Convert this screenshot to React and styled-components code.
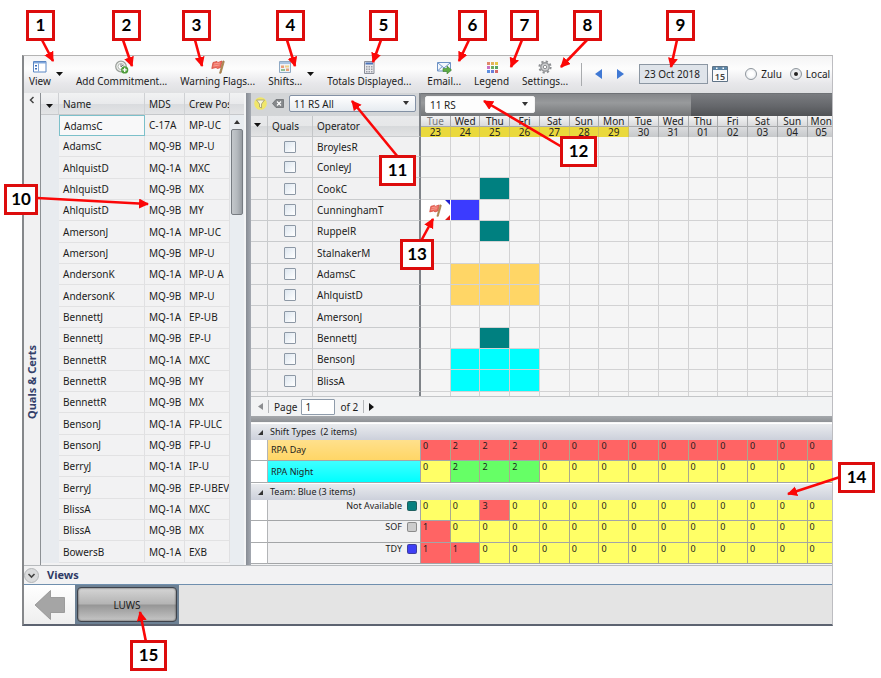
import React from "react";
import styled, { createGlobalStyle, css } from "styled-components";

const GlobalStyle = createGlobalStyle`
  *, *::before, *::after { box-sizing: border-box; }
  body { margin: 0; background: #fff; }
  body, button, input, select {
    font-family: "Noto Sans", "Open Sans", sans-serif;
    font-size: 10px;
    line-height: 14px;
    color: #1c1c1c;
  }
  button { border: 0; padding: 0; background: none; }
  table { border-collapse: separate; border-spacing: 0; table-layout: fixed; width: 100%; }
  th, td { padding: 0; font-weight: 400; text-align: left; white-space: nowrap; overflow: hidden; }
`;

/* ---------- data ---------- */

const qualRows = [
  ["AdamsC", "C-17A", "MP-UC"],
  ["AdamsC", "MQ-9B", "MP-U"],
  ["AhlquistD", "MQ-1A", "MXC"],
  ["AhlquistD", "MQ-9B", "MX"],
  ["AhlquistD", "MQ-9B", "MY"],
  ["AmersonJ", "MQ-1A", "MP-UC"],
  ["AmersonJ", "MQ-9B", "MP-U"],
  ["AndersonK", "MQ-1A", "MP-U A"],
  ["AndersonK", "MQ-9B", "MP-U"],
  ["BennettJ", "MQ-1A", "EP-UB"],
  ["BennettJ", "MQ-9B", "EP-U"],
  ["BennettR", "MQ-1A", "MXC"],
  ["BennettR", "MQ-9B", "MY"],
  ["BennettR", "MQ-9B", "MX"],
  ["BensonJ", "MQ-1A", "FP-ULC"],
  ["BensonJ", "MQ-9B", "FP-U"],
  ["BerryJ", "MQ-1A", "IP-U"],
  ["BerryJ", "MQ-9B", "EP-UBEV"],
  ["BlissA", "MQ-1A", "MXC"],
  ["BlissA", "MQ-9B", "MX"],
  ["BowersB", "MQ-1A", "EXB"],
];

const days = [
  ["Tue", "23"], ["Wed", "24"], ["Thu", "25"], ["Fri", "26"], ["Sat", "27"],
  ["Sun", "28"], ["Mon", "29"], ["Tue", "30"], ["Wed", "31"], ["Thu", "01"],
  ["Fri", "02"], ["Sat", "03"], ["Sun", "04"], ["Mon", "05"],
];

const TEAL = "#008080";
const BLUE = "#3b3bff";
const GOLD = "#ffd666";
const CYAN = "#00ffff";

const operators = [
  { name: "BroylesR" },
  { name: "ConleyJ" },
  { name: "CookC", shifts: { 2: TEAL } },
  { name: "CunninghamT", shifts: { 1: BLUE }, flag: true },
  { name: "RuppelR", shifts: { 2: TEAL } },
  { name: "StalnakerM" },
  { name: "AdamsC", shifts: { 1: GOLD, 2: GOLD, 3: GOLD } },
  { name: "AhlquistD", shifts: { 1: GOLD, 2: GOLD, 3: GOLD } },
  { name: "AmersonJ" },
  { name: "BennettJ", shifts: { 2: TEAL } },
  { name: "BensonJ", shifts: { 1: CYAN, 2: CYAN, 3: CYAN } },
  { name: "BlissA", shifts: { 1: CYAN, 2: CYAN, 3: CYAN } },
  { name: "" },
];

const RED = "#ff6464";
const YELLOW = "#ffff66";
const GREEN = "#66ff66";
const zeros = (n) => Array(n).fill(0);

const groups = [
  {
    title: "Shift Types  (2 items)",
    rows: [
      { label: "RPA Day", bar: GOLD, counts: [0, 2, 2, 2, ...zeros(10)], color: () => RED },
      { label: "RPA Night", bar: CYAN, counts: [0, 2, 2, 2, ...zeros(10)], color: (n) => (n ? GREEN : YELLOW) },
    ],
  },
  {
    title: "Team: Blue (3 items)",
    rows: [
      { label: "Not Available", swatch: "#0a8080", counts: [0, 0, 3, ...zeros(11)] },
      { label: "SOF", swatch: "#cccccc", counts: [1, ...zeros(13)] },
      { label: "TDY", swatch: "#3f3ff5", counts: [1, 1, ...zeros(12)] },
    ],
  },
];

const callouts = [
  { n: 1, x: 26, y: 10, w: 29, from: [42, 40], to: [53, 61] },
  { n: 2, x: 112, y: 10, w: 29, from: [123, 40], to: [132, 66] },
  { n: 3, x: 182, y: 10, w: 29, from: [195, 40], to: [202, 66] },
  { n: 4, x: 276, y: 10, w: 29, from: [287, 40], to: [295, 66] },
  { n: 5, x: 369, y: 10, w: 29, from: [381, 40], to: [373, 62] },
  { n: 6, x: 458, y: 10, w: 29, from: [469, 40], to: [459, 61] },
  { n: 7, x: 510, y: 10, w: 29, from: [522, 40], to: [511, 67] },
  { n: 8, x: 573, y: 10, w: 29, from: [587, 40], to: [561, 67] },
  { n: 9, x: 666, y: 10, w: 29, from: [677, 40], to: [671, 67] },
  { n: 10, x: 4, y: 184, w: 34, from: [37, 198], to: [148, 204] },
  { n: 11, x: 379, y: 155, w: 37, from: [398, 157], to: [352, 101] },
  { n: 12, x: 560, y: 136, w: 37, from: [562, 147], to: [484, 101] },
  { n: 13, x: 400, y: 239, w: 34, from: [421, 241], to: [433, 219] },
  { n: 14, x: 838, y: 462, w: 37, from: [840, 477], to: [788, 494] },
  { n: 15, x: 130, y: 640, w: 37, from: [146, 642], to: [140, 612] },
];

/* ---------- shell ---------- */

const Page = styled.div`
  position: relative;
  padding: 55px 48px 53px 22px;
`;

const Window = styled.main`
  display: flex;
  flex-direction: column;
  border-top: 1px solid #b4b4b4;
  border-right: 1px solid #bdbdc1;
  border-bottom: 2px solid #5c6370;
  border-left: 2px solid #85878a;
  background: #f2f2f3;
`;

const Toolbar = styled.header`
  display: flex;
  align-items: flex-start;
  gap: 13px;
  height: 37px;
  padding: 4px 0 0 5px;
  overflow: hidden;
  background: linear-gradient(#f4f4f5, #fdfdfd 35%, #e7e7ea 75%, #dfe0e2);
`;

const ToolButton = styled.button`
  display: flex;
  flex-direction: column;
  align-items: center;
  flex: none;
  white-space: nowrap;
`;

const SplitTool = styled.div`
  display: flex;
  align-items: center;
  gap: 5px;
`;

const ToolGroup = styled.div`
  display: flex;
  gap: 13px;
  margin-left: 3px;
`;

const Separator = styled.span`
  width: 1px;
  height: 23px;
  margin-top: 3px;
  background: #a9abae;
`;

const DateNav = styled.div`
  display: flex;
  align-items: center;
  gap: 15px;
  height: 28px;
`;

const IconButton = styled.button`
  display: flex;
  align-items: center;
  justify-content: center;
`;

const DateBox = styled.div`
  display: flex;
  align-items: center;
  gap: 4px;
`;

const DateInput = styled.input`
  width: 69px;
  height: 20px;
  padding: 0 4px;
  border: 1px solid #8c97a3;
  background: #dfe4ea;
`;

const ZoneChoice = styled.div`
  display: flex;
  align-items: center;
  gap: 8px;
  height: 28px;
  margin-left: 4px;
`;

const RadioLabel = styled.label`
  display: flex;
  align-items: center;
  gap: 4px;
`;

const Radio = styled.input`
  appearance: none;
  width: 12px;
  height: 12px;
  margin: 0;
  border: 1px solid #8f969d;
  border-radius: 50%;
  background: radial-gradient(circle, #fff 30%, #dfe3e8);
  &:checked {
    background: radial-gradient(circle, #222 0 20%, #eef0f2 35%, #d5dae0);
  }
`;

const Workspace = styled.div`
  display: flex;
  align-items: stretch;
  border-bottom: 1px solid #b7babd;
`;

/* ---------- left dock ---------- */

const DockStrip = styled.div`
  display: flex;
  flex-direction: column;
  align-items: center;
  flex: none;
  width: 17px;
  padding-top: 3px;
  border-right: 1px solid #8c9094;
  background: #f1f1f2;
`;

const DockTitle = styled.span`
  margin-top: 241px;
  writing-mode: vertical-rl;
  transform: rotate(180deg);
  font-weight: 700;
  font-size: 11px;
  color: #34406a;
`;

const QualsPanel = styled.section`
  display: flex;
  flex: none;
  width: 203px;
  background: #f2f2f3;
`;

const QualsGrid = styled.div`
  flex: 1;
  min-width: 0;
`;

const QualHead = styled.th`
  height: 22px;
  padding-left: ${(p) => (p.$first ? 0 : 4)}px;
  text-align: ${(p) => (p.$first ? "center" : "left")};
  border-right: 1px solid #cfd1d4;
  border-bottom: 1px solid #c6c8cb;
  background: linear-gradient(#f1f2f3, #e9eaec 50%, #d9dbde 52%, #e3e4e6);
`;

const QualRow = styled.tr`
  height: 21px;
  &:nth-child(3n) { height: 22px; }
`;

const QualCell = styled.td`
  padding-left: 4px;
  border-right: 1px solid #e0e0e2;
  border-bottom: 1px solid #e2e2e3;
  ${(p) => p.$selected && css`
    border: 1px solid #7cc0ca;
    background: #f8f8f9;
  `}
`;

const RowGutter = styled.td`
  background: #e8ebef;
`;

const ScrollColumn = styled.div`
  display: flex;
  flex-direction: column;
  align-items: center;
  width: 14px;
  background: #e9edf1;
`;

const ScrollHead = styled.div`
  width: 100%;
  height: 22px;
  border-bottom: 1px solid #c6c8cb;
  background: linear-gradient(#f1f2f3, #e9eaec 50%, #d9dbde 52%, #e3e4e6);
`;

const ScrollArrow = styled(IconButton)`
  height: 14px;
`;

const ScrollThumb = styled.div`
  width: 12px;
  height: 86px;
  border: 1px solid #777c82;
  border-radius: 2px;
  background: linear-gradient(90deg, #c3c7cb, #b4b9be 50%, #969ba1);
`;

const VerticalSplitter = styled.div`
  flex: none;
  width: 7px;
  border-left: 2px solid #f4f5f6;
  background: linear-gradient(90deg, #878c94, #a4a9b1);
`;

/* ---------- schedule ---------- */

const Schedule = styled.section`
  flex: 1;
  min-width: 0;
  padding-bottom: 1px;
  background: #f2f3f4;
`;

const FilterRow = styled.div`
  display: flex;
  height: 23px;
`;

const FilterBar = styled.div`
  display: flex;
  align-items: center;
  gap: 5px;
  flex: none;
  width: 170px;
  padding: 0 3px 2px 3px;
  border-right: 2px solid #7f8388;
  background: #d3d5d7;
`;

const SelectWrap = styled.span`
  position: relative;
  display: flex;
  flex: ${(p) => (p.$narrow ? "none" : 1)};
  width: ${(p) => (p.$narrow ? "110px" : "auto")};
  svg { position: absolute; right: 7px; top: 6px; pointer-events: none; }
`;

const Select = styled.select`
  appearance: none;
  width: 100%;
  height: 17px;
  padding: 0 4px;
  border: 1px solid ${(p) => (p.$plain ? "#f4f4f4" : "#8391a5")};
  border-radius: 2px;
  background: ${(p) => (p.$plain ? "#fdfdfd" : "linear-gradient(#fff, #e6ebf0)")};
`;

const MonthSpan = styled.div`
  flex: ${(p) => p.$share} 1 0;
  padding: ${(p) => (p.$dark ? "0" : "2px 4px")};
  border-top: 1px solid #6f7276;
  background: ${(p) => (p.$dark
    ? "linear-gradient(#7a7c80, #65676b 55%, #505255)"
    : "linear-gradient(#85878a, #989a9c 40%, #747678)")};
`;

const Viewport = styled.div`
  height: 281px;
  overflow: hidden;
  border-bottom: 1px solid #c4c6c8;
`;

const HeadCell = styled.th`
  height: 21px;
  padding-left: ${(p) => (p.$tight ? 3 : 4)}px;
  vertical-align: ${(p) => (p.$tight ? "top" : "middle")};
  border-right: ${(p) => (p.$edge ? "2px solid #7f8388" : "1px solid #c4c6c8")};
  border-bottom: 1px solid #c9cbcd;
  background: linear-gradient(#e8e9eb, #e6e7e8 50%, #d7d9db 52%, #e2e3e4);
`;

const DayCell = styled.th`
  height: 10px;
  line-height: 10px;
  text-align: center;
  overflow: visible;
  border-right: 1px solid #a7a9ab;
  color: ${(p) => (p.$muted ? "#77797b" : "#222")};
  background: linear-gradient(#f4f4f4, #d9dadc);
  &:last-child { padding-left: 3px; border-right: 0; }
`;

const DateCell = styled(DayCell)`
  height: 11px;
  color: #222;
  border-top: 1px solid #a7a9ab;
  border-right-color: ${(p) => (p.$soon ? "#cfc25c" : "#a7a9ab")};
  background: ${(p) => (p.$soon ? "#ead93c" : "linear-gradient(#dcdddf, #c6c8ca)")};
`;

const OperatorRow = styled.tr`
  height: 21px;
  &:first-child { height: 20px; }
  &:nth-child(3n) { height: 22px; }
`;

const GridCell = styled.td`
  padding-left: ${(p) => (p.$inset ? 4 : 0)}px;
  text-align: ${(p) => (p.$center ? "center" : "left")};
  border-right: ${(p) => (p.$edge ? "2px solid #7f8388" : "1px solid #c9cbcd")};
  border-bottom: 1px solid #c9cbcd;
  background: #f1f1f2;
`;

const SlotCell = styled.td`
  border-right: 1px solid #d2d2d3;
  border-bottom: 1px solid #d2d2d3;
  text-align: center;
  background: ${(p) => p.$fill || "#f5f5f5"};
  &:last-child { border-right: 0; }
  ${(p) => p.$flagged && css`
    background:
      linear-gradient(225deg, #2222d0 0 3px, transparent 4px),
      linear-gradient(315deg, #e01818 0 3px, transparent 4px),
      #fff;
    border-right-color: #fff;
  `}
  svg { display: block; margin: 0 auto; }
`;

const Checkbox = styled.input`
  appearance: none;
  display: block;
  width: 12px;
  height: 12px;
  margin: 0 auto;
  border: 1px solid #8d98a5;
  border-radius: 1px;
  background: linear-gradient(135deg, #dde6ef, #fff);
`;

const Pager = styled.nav`
  display: flex;
  align-items: center;
  gap: 5px;
  height: 19px;
  padding-left: 7px;
`;

const PagerRule = styled.span`
  width: 1px;
  height: 13px;
  background: #b4b6b9;
`;

const PageLabel = styled.label`
  display: flex;
  align-items: center;
  gap: 4px;
`;

const PageInput = styled.input`
  width: 34px;
  height: 16px;
  padding: 0 3px;
  border: 1px solid #8f9cab;
  border-radius: 1px;
  background: #fff;
`;

const HorizontalSplitter = styled.div`
  height: 7px;
  border-bottom: 1px solid #f6f6f6;
  background: linear-gradient(#a5a8ac, #8f9296);
`;

/* ---------- totals ---------- */

const Totals = styled.table`
  font-size: 9px;
  line-height: 12px;
`;

const GroupHead = styled.th`
  height: 17px;
  padding-left: 7px;
  white-space: pre;
  border-top: 1px solid #fff;
  background: linear-gradient(#e9ebee, #ccd0db);
  svg { margin-right: 7px; }
`;

const TotalRow = styled.tr`
  height: 21px;
  &:nth-child(3n) { height: 22px; }
`;

const TotalGutter = styled.td`
  border-right: 1px solid #b3b5b7;
  border-bottom: 1px solid #a9abad;
  background: #fff;
`;

const TotalLabel = styled.th`
  padding: 0 3px;
  border-right: 1px solid #a3a5a7;
  border-bottom: 1px solid #a3a5a7;
  vertical-align: ${(p) => (p.$bar ? "middle" : "top")};
  background: ${(p) => (p.$bar
    ? `linear-gradient(rgba(255,255,255,.25), rgba(255,255,255,0)), ${p.$bar}`
    : "#f1f1f2")};
`;

const SwatchLine = styled.span`
  display: flex;
  justify-content: flex-end;
  align-items: center;
  gap: 5px;
`;

const Swatch = styled.span`
  width: 10px;
  height: 10px;
  border: 1px solid rgba(60, 60, 60, 0.45);
  border-radius: 2px;
  background: ${(p) => p.$color};
`;

const CountCell = styled.td`
  padding-left: 2px;
  vertical-align: top;
  border-right: 1px solid #aaa98c;
  border-bottom: 1px solid #a3a5a7;
  background: ${(p) => p.$fill};
  &:last-child { border-right: 0; }
`;

/* ---------- footer ---------- */

const ViewsBar = styled.div`
  display: flex;
  align-items: center;
  gap: 8px;
  height: 19px;
  border-bottom: 1px solid #6f8fae;
  font-size: 11px;
  font-weight: 700;
  color: #2f3b66;
`;

const TaskBar = styled.div`
  display: flex;
  height: 39px;
  background: #e4e4e4;
`;

const BackButton = styled(IconButton)`
  width: 51px;
  background: linear-gradient(#fff, #eeeeee);
`;

const TaskFrame = styled.div`
  display: flex;
  padding: 2px;
  background: #6d8194;
`;

const TaskButton = styled.button`
  width: 100px;
  border: 1px solid #3f434b;
  border-radius: 4px;
  box-shadow: inset 0 0 2px #333;
  background: linear-gradient(#d5d5d5, #b4b4b4 48%, #969696 52%, #c6c6c6);
`;

/* ---------- annotations ---------- */

const Arrows = styled.svg`
  position: absolute;
  inset: 0;
  width: 100%;
  height: 100%;
  pointer-events: none;
`;

const Callout = styled.span`
  position: absolute;
  left: ${(p) => p.$x}px;
  top: ${(p) => p.$y}px;
  width: ${(p) => p.$w}px;
  height: 31px;
  border: 3px solid #dd0c0c;
  background: #fff;
  color: #000;
  font: 700 17px/24px Lato, sans-serif;
  text-align: center;
`;

/* ---------- icons ---------- */

const Caret = ({ w = 7, h = 4, color = "#111" }) => (
  <svg width={w} height={h} viewBox="0 0 8 4" preserveAspectRatio="none"><path d="M0 0h8L4 4z" fill={color} /></svg>
);
const Side = ({ left, color, w = 6, h = 10 }) => (
  <svg width={w} height={h} viewBox="0 0 6 10" preserveAspectRatio="none">
    <path d={left ? "M6 0v10L0 5z" : "M0 0v10l6-5z"} fill={color} />
  </svg>
);
const ViewIcon = () => (
  <svg width="14" height="14" viewBox="0 0 14 14">
    <path d="M.5 1.500h12.500v10.500H.5z" fill="#fff" stroke="#5b87c4" />
    <path d="M1 2h12v1.500H1z" fill="#7fa6dc" />
    <path d="M5.500 3.500v8" stroke="#7fa6dc" />
    <path d="M2 5h2v1.500H2zM2 8h2v1.500H2z" fill="#3d6cb5" />
  </svg>
);
const CommitIcon = () => (
  <svg width="14" height="14" viewBox="0 0 14 14">
    <circle cx="6" cy="6.500" r="5.300" fill="#eceeec" stroke="#9a9f9a" strokeWidth="1.200" />
    <circle cx="6" cy="6.500" r="3" fill="#fff" stroke="#b3b8b3" />
    <path d="M6 4v3l2-2" stroke="#777" fill="none" />
    <circle cx="9.700" cy="9.900" r="3.600" fill="#4f9c3b" />
    <path d="M9.700 7.800v4.200M7.600 9.900h4.200" stroke="#fff" strokeWidth="1.300" />
  </svg>
);
const FlagIcon = ({ size = 14 }) => (
  <svg width={size} height={size} viewBox="0 0 14 14">
    <path d="M2 2.500 6 1.500l1 1L11 1l-1.500 6.500-3 1-1.500-1L.8 8.500z" fill="#ee6f62" stroke="#d2473b" strokeWidth=".8" />
    <path d="M3 4l6-1M2.500 6l6-1" stroke="#f9b0a6" strokeWidth=".7" />
    <path d="M12 .8 13.300 1.500 10 13.200H8.500z" fill="#c09456" stroke="#8a6534" strokeWidth=".6" />
  </svg>
);
const ShiftsIcon = () => (
  <svg width="14" height="14" viewBox="0 0 14 14">
    <path d="M1.500 1.500h11v11h-11z" fill="#eef3f8" stroke="#8fa9c4" />
    <path d="M2 2h10v2H2z" fill="#a8c4e2" />
    <path d="M3 5.500h3v2.500H3zM8 8.500h3V11H8z" fill="#e9a07a" />
    <path d="M7 5.500h4v2H7z" fill="#f0d28a" /><path d="M3 9h4v2H3z" fill="#92bf91" />
  </svg>
);
const CalcIcon = () => (
  <svg width="14" height="14" viewBox="0 0 14 14">
    <path d="M2.500 1.500h9.500v12H2.500z" fill="#e9e9ec" stroke="#8b8e99" />
    <path d="M3.500 2.500h7.500v2H3.500z" fill="#4c74bb" />
    <path d="M4 6h1.500v1.500H4zM6.500 6H8v1.500H6.500zM9 6h1.500v1.500H9zM4 8.500h1.500V10H4zM6.500 8.500H8V10H6.500zM9 8.500h1.500V10H9zM4 11h1.500v1.500H4zM6.500 11H8v1.500H6.500zM9 11h1.500v1.500H9z" fill="#9c9fa8" />
  </svg>
);
const MailIcon = () => (
  <svg width="15" height="14" viewBox="0 0 15 14">
    <path d="M.5 2.500h13v8.500H.5z" fill="#f4f8fd" stroke="#6e93c6" />
    <path d="M.8 2.800 7 8l6.300-5.200M1 10.500l4.300-4" fill="none" stroke="#6e93c6" />
    <path d="M6 8.500h4V6l4.500 4-4.500 4v-2.500H6z" fill="#5fae45" stroke="#3d8030" strokeWidth=".6" />
  </svg>
);
const LegendIcon = () => (
  <svg width="12" height="14" viewBox="0 0 12 14">
    {["#e08a6a", "#e3b35a", "#e5c84a", "#c970c4", "#6fae5e", "#5aa567", "#5e8fe0", "#6b7fd8", "#d96868"].map((c, i) => (
      <rect key={i} x={1 + (i % 3) * 4} y={2 + Math.floor(i / 3) * 4} width="3" height="3" fill={c} />
    ))}
  </svg>
);
const GearIcon = () => (
  <svg width="14" height="14" viewBox="0 0 14 14">
    <circle cx="7" cy="7" r="5.600" fill="none" stroke="#8d8f92" strokeWidth="2" strokeDasharray="2.200 2.200" />
    <circle cx="7" cy="7" r="4.200" fill="#cfd0d2" stroke="#96989b" strokeWidth="1.400" />
    <circle cx="7" cy="7" r="1.700" fill="#fff" stroke="#8d8f92" />
  </svg>
);
const CalendarIcon = () => (
  <svg width="16" height="16" viewBox="0 0 16 16">
    <path d="M.5.5h15v15H.5z" fill="#fafbfc" stroke="#5f7386" />
    <path d="M1 1h14v3H1z" fill="#5e87a8" />
    <path d="M4 1.500h1.500V3H4zM10.500 1.500H12V3h-1.500z" fill="#fff" />
    <text x="8" y="13.500" textAnchor="middle" fontSize="9" fontWeight="600" fontFamily="Noto Sans, sans-serif" fill="#444">15</text>
  </svg>
);
const FunnelIcon = () => (
  <svg width="13" height="15" viewBox="0 0 13 15">
    <circle cx="6.500" cy="7.500" r="6.300" fill="#f0e66a" />
    <path d="M2.500 4h8L7.500 8v4l-2-1V8z" fill="#f7f5df" stroke="#a39d6b" strokeWidth=".8" />
  </svg>
);
const ClearIcon = () => (
  <svg width="12" height="9" viewBox="0 0 12 9">
    <path d="M4 .5h7.500v8H4L.5 4.500z" fill="#85888b" stroke="#6c6f72" strokeWidth=".8" />
    <path d="M5 2.500l4 4M9 2.500l-4 4" stroke="#fff" strokeWidth="1.200" />
  </svg>
);
const Expander = () => (
  <svg width="5" height="5" viewBox="0 0 5 5"><path d="M5 0v5H0z" fill="#333" /></svg>
);

/* ---------- parts ---------- */

const Tool = ({ icon, label }) => (
  <ToolButton type="button">{icon}<span>{label}</span></ToolButton>
);

const Col = styled.col`
  width: ${(p) => p.$w};
`;

const dayCols = days.map((_, i) => <Col key={i} $w={i < 13 ? "5.12%" : "auto"} />);

function AppToolbar() {
  return (
    <Toolbar>
      <SplitTool>
        <Tool icon={<ViewIcon />} label="View" />
        <IconButton type="button" aria-label="View options"><Caret /></IconButton>
      </SplitTool>
      <Tool icon={<CommitIcon />} label="Add Commitment..." />
      <Tool icon={<FlagIcon />} label="Warning Flags..." />
      <SplitTool>
        <Tool icon={<ShiftsIcon />} label="Shifts..." />
        <IconButton type="button" aria-label="Shift options"><Caret /></IconButton>
      </SplitTool>
      <Tool icon={<CalcIcon />} label="Totals Displayed..." />
      <ToolGroup>
        <Tool icon={<MailIcon />} label="Email..." />
        <Tool icon={<LegendIcon />} label="Legend" />
        <Tool icon={<GearIcon />} label="Settings..." />
      </ToolGroup>
      <Separator />
      <DateNav>
        <IconButton type="button" aria-label="Previous day"><Side left color="#3f78d4" w={7} /></IconButton>
        <IconButton type="button" aria-label="Next day"><Side color="#3f78d4" w={7} /></IconButton>
        <DateBox>
          <DateInput aria-label="Date" defaultValue="23 Oct 2018" />
          <IconButton type="button" aria-label="Open calendar"><CalendarIcon /></IconButton>
        </DateBox>
      </DateNav>
      <ZoneChoice>
        <RadioLabel><Radio type="radio" name="zone" />Zulu</RadioLabel>
        <RadioLabel><Radio type="radio" name="zone" defaultChecked />Local</RadioLabel>
      </ZoneChoice>
    </Toolbar>
  );
}

function Quals() {
  return (
    <QualsPanel>
      <QualsGrid>
        <table>
          <colgroup>
            <Col $w="18px" /><Col $w="86px" /><Col $w="40px" /><Col $w="auto" />
          </colgroup>
          <thead>
            <tr>
              <QualHead $first aria-label="Options"><Caret /></QualHead>
              <QualHead>Name</QualHead><QualHead>MDS</QualHead><QualHead>Crew Pos</QualHead>
            </tr>
          </thead>
          <tbody>
            {qualRows.map((r, i) => (
              <QualRow key={i}>
                <RowGutter />
                {r.map((v, j) => <QualCell key={j} $selected={i === 0 && j === 0}>{v}</QualCell>)}
              </QualRow>
            ))}
          </tbody>
        </table>
      </QualsGrid>
      <ScrollColumn>
        <ScrollHead />
        <ScrollArrow type="button" aria-label="Scroll up">
          <svg width="6" height="4" viewBox="0 0 6 4"><path d="M0 4h6L3 0z" fill="#333" /></svg>
        </ScrollArrow>
        <ScrollThumb />
      </ScrollColumn>
    </QualsPanel>
  );
}

function ScheduleGrid() {
  return (
    <Viewport>
      <table>
        <colgroup>
          <Col $w="17px" /><Col $w="45px" /><Col $w="108px" />
          {dayCols}
        </colgroup>
        <thead>
          <tr>
            <HeadCell rowSpan={2} $tight aria-label="Options"><Caret /></HeadCell>
            <HeadCell rowSpan={2}>Quals</HeadCell>
            <HeadCell rowSpan={2} $edge>Operator</HeadCell>
            {days.map(([d], i) => <DayCell key={i} $muted={i === 0}>{d}</DayCell>)}
          </tr>
          <tr>{days.map(([, n], i) => <DateCell key={i} $soon={i < 7}>{n}</DateCell>)}</tr>
        </thead>
        <tbody>
          {operators.map((o, row) => (
            <OperatorRow key={row}>
              <GridCell />
              <GridCell $center><Checkbox type="checkbox" aria-label={`Quals ${o.name}`} /></GridCell>
              <GridCell $inset $edge>{o.name}</GridCell>
              {days.map((_, i) => (
                <SlotCell key={i} $fill={o.shifts?.[i]} $flagged={o.flag && i === 0}>
                  {o.flag && i === 0 && <FlagIcon size={13} />}
                </SlotCell>
              ))}
            </OperatorRow>
          ))}
        </tbody>
      </table>
    </Viewport>
  );
}

function TotalsGrid() {
  return (
    <Totals>
      <colgroup>
        <Col $w="17px" /><Col $w="153px" />
        {dayCols}
      </colgroup>
      {groups.map((g) => (
        <tbody key={g.title}>
          <tr><GroupHead colSpan={16}><Expander />{g.title}</GroupHead></tr>
          {g.rows.map((r) => (
            <TotalRow key={r.label}>
              <TotalGutter />
              <TotalLabel $bar={r.bar}>
                {r.bar ? r.label : <SwatchLine>{r.label}<Swatch $color={r.swatch} /></SwatchLine>}
              </TotalLabel>
              {r.counts.map((n, i) => (
                <CountCell key={i} $fill={r.color ? r.color(n) : n ? RED : YELLOW}>{n}</CountCell>
              ))}
            </TotalRow>
          ))}
        </tbody>
      ))}
    </Totals>
  );
}

function Annotations() {
  return (
    <>
      <Arrows>
        <defs>
          <marker id="head" markerWidth="11" markerHeight="11" refX="9" refY="5" orient="auto" markerUnits="userSpaceOnUse">
            <path d="M0 0 10 5 0 10z" fill="#fb0707" />
          </marker>
        </defs>
        {callouts.map((c) => (
          <line key={c.n} x1={c.from[0]} y1={c.from[1]} x2={c.to[0]} y2={c.to[1]} stroke="#fb0707" strokeWidth="2.600" markerEnd="url(#head)" />
        ))}
      </Arrows>
      {callouts.map((c) => <Callout key={c.n} $x={c.x} $y={c.y} $w={c.w}>{c.n}</Callout>)}
    </>
  );
}

export default function App() {
  return (
    <Page>
      <GlobalStyle />
      <Window>
        <AppToolbar />
        <Workspace>
          <DockStrip>
            <IconButton type="button" aria-label="Collapse panel">
              <svg width="6" height="8" viewBox="0 0 6 8"><path d="M4.500 1 1.500 4l3 3" fill="none" stroke="#444" strokeWidth="1.500" /></svg>
            </IconButton>
            <DockTitle>Quals &amp; Certs</DockTitle>
          </DockStrip>
          <Quals />
          <VerticalSplitter />
          <Schedule>
            <FilterRow>
              <FilterBar>
                <IconButton type="button" aria-label="Filter"><FunnelIcon /></IconButton>
                <IconButton type="button" aria-label="Clear filter"><ClearIcon /></IconButton>
                <SelectWrap>
                  <Select aria-label="Operator filter"><option>11 RS All</option></Select>
                  <Caret w={6} color="#333" />
                </SelectWrap>
              </FilterBar>
              <MonthSpan $share={268}>
                <SelectWrap $narrow>
                  <Select $plain aria-label="Squadron"><option>11 RS</option></Select>
                  <Caret w={6} color="#333" />
                </SelectWrap>
              </MonthSpan>
              <MonthSpan $share={144} $dark />
            </FilterRow>
            <ScheduleGrid />
            <Pager>
              <IconButton type="button" aria-label="Previous page"><Side left color="#8b8d90" w={5} h={7} /></IconButton>
              <PagerRule />
              <PageLabel>Page<PageInput defaultValue="1" /></PageLabel>
              <span>of 2</span>
              <PagerRule />
              <IconButton type="button" aria-label="Next page"><Side color="#111" w={5} h={8} /></IconButton>
            </Pager>
            <HorizontalSplitter />
            <TotalsGrid />
          </Schedule>
        </Workspace>
        <ViewsBar>
          <IconButton type="button" aria-label="Collapse views">
            <svg width="15" height="15" viewBox="0 0 15 15">
              <circle cx="7.500" cy="7.500" r="7" fill="#dadbdc" stroke="#b4b6b8" />
              <path d="M4.500 6l3 3 3-3" fill="none" stroke="#444" strokeWidth="1.600" />
            </svg>
          </IconButton>
          Views
        </ViewsBar>
        <TaskBar>
          <BackButton type="button" aria-label="Back">
            <svg width="30" height="30" viewBox="0 0 30 30">
              <path d="M0 15 15.500.5v7H29.500v15H15.500v7z" fill="#a5a5a5" stroke="#8f8f8f" strokeWidth=".8" />
            </svg>
          </BackButton>
          <TaskFrame><TaskButton type="button">LUWS</TaskButton></TaskFrame>
        </TaskBar>
      </Window>
      <Annotations />
    </Page>
  );
}
